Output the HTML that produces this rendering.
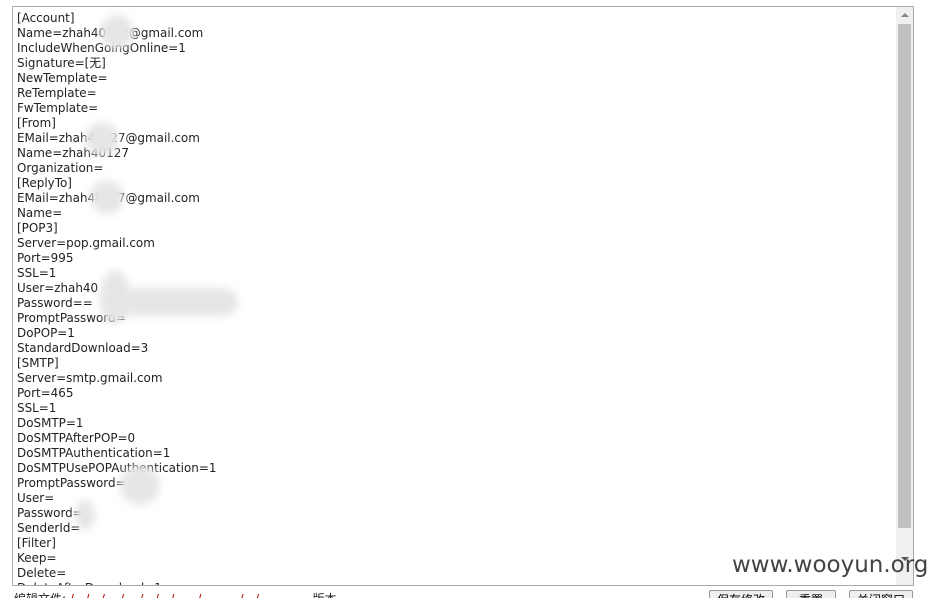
<!DOCTYPE html>
<html><head><meta charset="utf-8"><style>
html,body{margin:0;padding:0;background:#fff;width:938px;height:598px;overflow:hidden;position:relative}
.ta{position:absolute;left:12px;top:6px;width:900px;height:578px;border:1px solid #a9a9a9;overflow:hidden;background:#fff}
.txt{position:absolute;left:4px;top:4px;font-family:"DejaVu Sans","Noto Sans CJK SC",sans-serif;font-size:11.95px;line-height:15px;color:#222;white-space:pre}
.sb{position:absolute;right:0;top:0;width:17px;height:578px;background:#f0f0f0}
.thumb{position:absolute;left:2px;top:17px;width:13px;height:504px;background:#c1c1c1}
.arr{position:absolute;left:5px;width:0;height:0;border-left:4px solid transparent;border-right:4px solid transparent}
.blob{position:absolute;background:#e6e6e6;filter:blur(4px);border-radius:50%}
.wm{position:absolute;left:732px;top:552px;font-family:"DejaVu Sans",sans-serif;font-size:23px;color:#444}
.bottom{position:absolute;left:14px;top:590px;font-family:"DejaVu Sans","Noto Sans CJK SC",sans-serif;font-size:12px;color:#222;white-space:pre}
.btn{position:absolute;top:590px;height:20px;border:1px solid #999;background:#eee;border-radius:2px;font-family:"Noto Sans CJK SC",sans-serif;font-size:12px;text-align:center;line-height:18px}
</style></head><body>
<div class="ta"><div class="txt">[Account]
Name=zhah40127@gmail.com
IncludeWhenGoingOnline=1
Signature=[无]
NewTemplate=
ReTemplate=
FwTemplate=
[From]
EMail=zhah40127@gmail.com
Name=zhah40127
Organization=
[ReplyTo]
EMail=zhah40127@gmail.com
Name=
[POP3]
Server=pop.gmail.com
Port=995
SSL=1
User=zhah40
Password==
PromptPassword=
DoPOP=1
StandardDownload=3
[SMTP]
Server=smtp.gmail.com
Port=465
SSL=1
DoSMTP=1
DoSMTPAfterPOP=0
DoSMTPAuthentication=1
DoSMTPUsePOPAuthentication=1
PromptPassword=
User=
Password=
SenderId=
[Filter]
Keep=
Delete=
DeleteAfterDownload=1</div>
<div class="sb"><div class="arr" style="top:6px;border-bottom:4px solid #888"></div><div class="thumb"></div><div class="arr" style="top:550px;border-top:4px solid #555"></div></div>
</div>
<div class="blob" style="left:100px;top:15px;width:34px;height:34px"></div>
<div class="blob" style="left:85px;top:122px;width:34px;height:34px"></div>
<div class="blob" style="left:90px;top:180px;width:34px;height:34px"></div>
<div class="blob" style="left:100px;top:270px;width:30px;height:54px"></div>
<div class="blob" style="left:118px;top:288px;width:120px;height:28px;border-radius:14px"></div>
<div class="blob" style="left:120px;top:465px;width:40px;height:40px"></div>
<div class="blob" style="left:75px;top:500px;width:20px;height:30px"></div>
<div class="wm">www.wooyun.org</div>
<div class="bottom">编辑文件: <span style="color:#a00">/.../.../... /..../.../.../....../... ....../.. /...... ...</span>    版本 ..</div>
<div class="btn" style="left:709px;width:62px">保存修改</div>
<div class="btn" style="left:786px;width:48px">重置</div>
<div class="btn" style="left:849px;width:62px">关闭窗口</div>
</body></html>
